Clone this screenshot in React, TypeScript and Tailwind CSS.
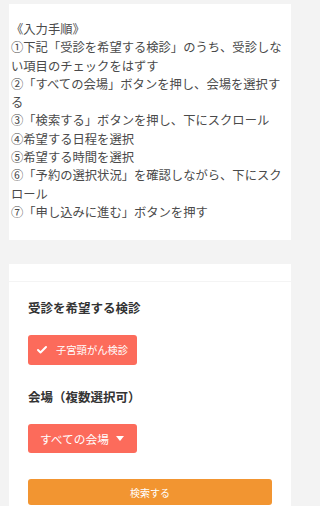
import { Check } from "lucide-react";

const steps = [
  "《入力手順》",
  "①下記「受診を希望する検診」のうち、受診しない項目のチェックをはずす",
  "②「すべての会場」ボタンを押し、会場を選択する",
  "③「検索する」ボタンを押し、下にスクロール",
  "④希望する日程を選択",
  "⑤希望する時間を選択",
  "⑥「予約の選択状況」を確認しながら、下にスクロール",
  "⑦「申し込みに進む」ボタンを押す",
];

export default function App() {
  return (
    <div className="min-h-screen bg-[#f3f3f3]">
      <div
        className="h-[506px] w-[300px] overflow-hidden bg-[#f3f3f3] px-[9px] pt-[4px]"
        style={{ fontFamily: '"Noto Sans CJK JP", "Noto Sans", sans-serif' }}
      >
        {/* Instructions */}
        <div className="w-[282px] bg-white px-[2px] pt-[16px] pb-[19px] text-[12.3px] leading-[18.3px] text-[#4a4a4a]">
          {steps.map((s) => (
            <p key={s}>{s}</p>
          ))}
        </div>

        {/* Search form */}
        <div className="mt-[24px] w-[282px] bg-white">
          <div className="h-[18px] border-b border-[#f4f4f4]" />
          <div className="px-[19px] pt-[17px] pb-[10px]">
            <h3 className="text-[12.5px] leading-[18px] font-bold text-[#333333]">
              受診を希望する検診
            </h3>
            <button className="mt-[18px] flex h-[30px] w-[109px] items-center rounded-[3px] bg-[#fc6b5b] pl-[8px] text-white">
              <Check size={12} strokeWidth={4} className="shrink-0" />
              <span className="ml-[8px] text-[10.3px] leading-none">子宮頸がん検診</span>
            </button>

            <h3 className="mt-[23px] text-[12.5px] leading-[18px] font-bold text-[#333333]">
              会場（複数選択可）
            </h3>
            <button className="mt-[18px] flex h-[29px] w-[109px] items-center rounded-[3px] bg-[#fc6b5b] pl-[12px] text-white">
              <span className="text-[11.7px] leading-none">すべての会場</span>
              <svg width="8" height="5" viewBox="0 0 8 5" className="ml-[7px]">
                <path d="M0 0 L8 0 L4 5 Z" fill="white" />
              </svg>
            </button>

            <button className="mt-[26px] flex h-[26px] w-full items-center justify-center rounded-[3px] bg-[#f29531] text-[10px] text-white">
              検索する
            </button>
          </div>
        </div>
      </div>
    </div>
  );
}
